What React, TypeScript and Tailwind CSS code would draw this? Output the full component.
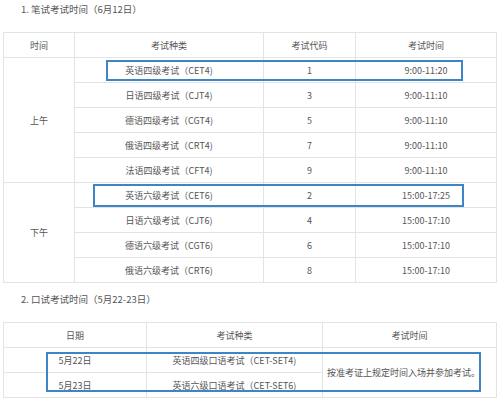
const FONT = { fontFamily: '"Microsoft YaHei", "Noto Sans CJK SC", "Noto Sans", sans-serif' }

type Row = { name: string; code: string; time: string }

const AM: Row[] = [
  { name: '英语四级考试（CET4)', code: '1', time: '9:00-11:20' },
  { name: '日语四级考试（CJT4)', code: '3', time: '9:00-11:10' },
  { name: '德语四级考试（CGT4)', code: '5', time: '9:00-11:10' },
  { name: '俄语四级考试（CRT4)', code: '7', time: '9:00-11:10' },
  { name: '法语四级考试（CFT4)', code: '9', time: '9:00-11:10' },
]

const PM: Row[] = [
  { name: '英语六级考试（CET6)', code: '2', time: '15:00-17:25' },
  { name: '日语六级考试（CJT6)', code: '4', time: '15:00-17:10' },
  { name: '德语六级考试（CGT6)', code: '6', time: '15:00-17:10' },
  { name: '俄语六级考试（CRT6)', code: '8', time: '15:00-17:10' },
]

const cell = 'border border-[#e3e3e3] h-[25px] p-0 text-center align-middle font-normal'

function Group({ label, rows }: { label: string; rows: Row[] }) {
  return (
    <>
      {rows.map((r, i) => (
        <tr key={r.code}>
          {i === 0 && (
            <td rowSpan={rows.length} className={cell}>{label}</td>
          )}
          <td className={cell}>{r.name}</td>
          <td className={cell}>{r.code}</td>
          <td className={cell}>{r.time}</td>
        </tr>
      ))}
    </>
  )
}

export default function App() {
  return (
    <div className="w-[500px] h-[399px] overflow-hidden bg-white text-[9px] leading-none text-[#555]" style={FONT}>
      <div className="h-[20px] flex items-center pl-[21px] text-[9.5px]">1. 笔试考试时间（6月12日）</div>

      <div className="relative mt-[12px] mx-[3px]">
        <table className="w-[494px] table-fixed border-collapse">
          <colgroup>
            <col className="w-[71px]" />
            <col className="w-[189px]" />
            <col className="w-[92px]" />
            <col />
          </colgroup>
          <thead>
            <tr>
              <th className={cell}>时间</th>
              <th className={cell}>考试种类</th>
              <th className={cell}>考试代码</th>
              <th className={cell}>考试时间</th>
            </tr>
          </thead>
          <tbody>
            <Group label="上午" rows={AM} />
            <Group label="下午" rows={PM} />
          </tbody>
        </table>
        <div className="absolute left-[103px] top-[28px] w-[357px] h-[21px] border-2 border-[#3d85c6]" />
        <div className="absolute left-[90px] top-[152px] w-[371px] h-[23px] border-2 border-[#3d85c6]" />
      </div>

      <div className="h-[20px] mt-[7px] flex items-center pl-[21px] text-[9.5px]">2. 口试考试时间（5月22-23日）</div>

      <div className="relative mt-[12px] mx-[3px]">
        <table className="w-[494px] table-fixed border-collapse">
          <colgroup>
            <col className="w-[143px]" />
            <col className="w-[176px]" />
            <col />
          </colgroup>
          <thead>
            <tr>
              <th className={cell}>日期</th>
              <th className={cell}>考试种类</th>
              <th className={cell}>考试时间</th>
            </tr>
          </thead>
          <tbody>
            <tr>
              <td className={cell}>5月22日</td>
              <td className={cell}>英语四级口语考试（CET-SET4)</td>
              <td rowSpan={2} className={cell + ' !text-left pl-[4px]'}>按准考证上规定时间入场并参加考试。</td>
            </tr>
            <tr>
              <td className={cell}>5月23日</td>
              <td className={cell}>英语六级口语考试（CET-SET6)</td>
            </tr>
          </tbody>
        </table>
        <div className="absolute left-[43px] top-[30px] w-[435px] h-[40px] border-2 border-[#3d85c6]" />
      </div>
    </div>
  )
}
